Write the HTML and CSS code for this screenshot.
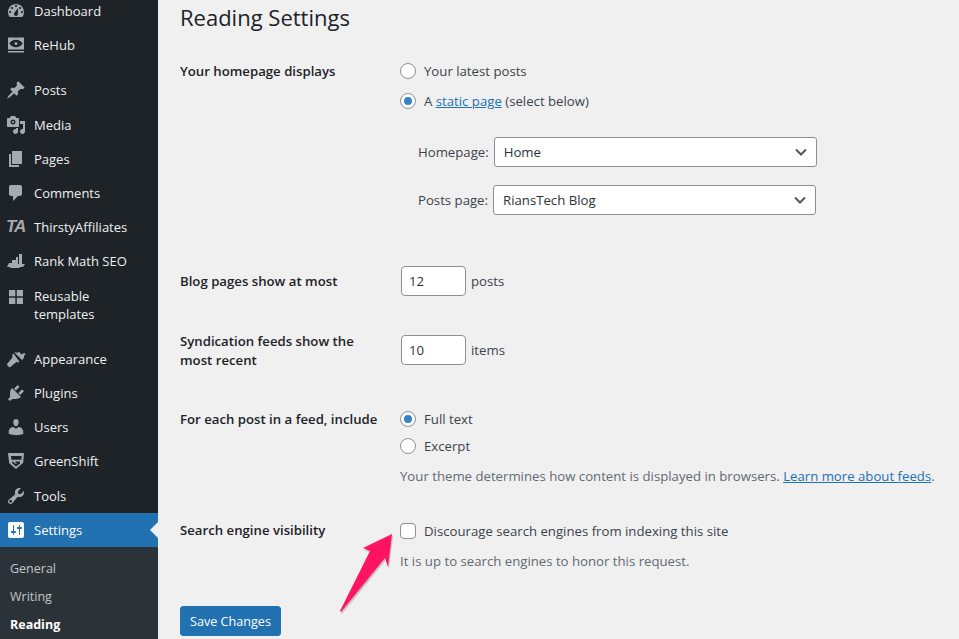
FILE: index.html
```html
<!DOCTYPE html>
<html lang="en">
<head>
    <meta charset="UTF-8">
    <meta name="viewport" content="width=device-width, initial-scale=1.0">
    <title>Reading Settings</title>
    <link rel="stylesheet" href="styles.css">
</head>
<body>
    <div class="admin">
        <nav class="sidebar">
            <ul class="menu">
                <li class="menu-item">
                    <svg class="menu-icon" viewBox="0 0 20 20"><path d="M3.760 16h12.480c1.100-1.430 1.760-3.140 1.760-5 0-4.420-3.580-8-8-8s-8 3.580-8 8c0 1.860.66 3.570 1.760 5zM10 4c.55 0 1 .45 1 1s-.45 1-1 1-1-.45-1-1 .45-1 1-1zM6 6c.55 0 1 .45 1 1s-.45 1-1 1-1-.45-1-1 .45-1 1-1zm8 0c.55 0 1 .45 1 1s-.45 1-1 1-1-.45-1-1 .45-1 1-1zm-5.370 5.550L12 7v6c0 1.100-.9 2-2 2s-2-.9-2-2c0-.57.24-1.080.63-1.450zM4 10c.55 0 1 .45 1 1s-.45 1-1 1-1-.45-1-1 .45-1 1-1zm12 0c.55 0 1 .45 1 1s-.45 1-1 1-1-.45-1-1 .45-1 1-1z"/></svg>
                    <span>Dashboard</span>
                </li>
                <li class="menu-item menu-item-last">
                    <svg class="menu-icon" viewBox="0 0 20 20"><path d="M2 2.500h16v12H2zM10 4.800c-3 0-5.600 1.800-6.600 3.700 1 1.900 3.600 3.700 6.600 3.700s5.600-1.800 6.600-3.700c-1-1.900-3.600-3.700-6.600-3.700zM10 7a1.500 1.500 0 1 1 0 3 1.500 1.500 0 0 1 0-3zM2 16h16v1.500H2z"/></svg>
                    <span>ReHub</span>
                </li>
                <li class="menu-item">
                    <svg class="menu-icon" viewBox="0 0 20 20"><path d="M10.440 3.020l1.820-1.820 6.360 6.350-1.830 1.820c-1.050-.68-2.480-.57-3.410.36l-.75.75c-.92.93-1.040 2.350-.35 3.410l-1.830 1.820-2.410-2.410-2.800 2.790c-.42.42-3.380 2.710-3.800 2.290s1.860-3.390 2.280-3.810l2.790-2.790L4.100 9.360l1.830-1.820c1.050.69 2.480.57 3.400-.36l.75-.75c.93-.92 1.050-2.350.36-3.410z"/></svg>
                    <span>Posts</span>
                </li>
                <li class="menu-item">
                    <svg class="menu-icon" viewBox="0 0 20 20"><path d="M13 11V4c0-.55-.45-1-1-1h-1.670L9 1H5L3.670 3H2c-.55 0-1 .45-1 1v7c0 .55.45 1 1 1h10c.55 0 1-.45 1-1zM7 4.500c1.380 0 2.500 1.120 2.500 2.500S8.380 9.500 7 9.500 4.500 8.380 4.500 7 5.620 4.500 7 4.500zM7 8c.55 0 1-.45 1-1s-.45-1-1-1-1 .45-1 1 .45 1 1 1zM14 6h5v10.500c0 1.380-1.120 2.500-2.500 2.500S14 17.880 14 16.500s1.120-2.500 2.500-2.500c.17 0 .34.02.5.05V9h-3V6zm-4 8.050V13h2v3.500c0 1.380-1.120 2.500-2.500 2.500S7 17.880 7 16.500 8.120 14 9.500 14c.17 0 .34.02.5.05z"/></svg>
                    <span>Media</span>
                </li>
                <li class="menu-item">
                    <svg class="menu-icon" viewBox="0 0 20 20"><path d="M6 15V2h10v13H6zm-1 1h8v2H3V5h2v11z"/></svg>
                    <span>Pages</span>
                </li>
                <li class="menu-item">
                    <svg class="menu-icon" viewBox="0 0 20 20"><path d="M5 2h9c1.100 0 2 .9 2 2v7c0 1.100-.9 2-2 2h-2l-5 5v-5H5c-1.100 0-2-.9-2-2V4c0-1.100.9-2 2-2z"/></svg>
                    <span>Comments</span>
                </li>
                <li class="menu-item">
                    <span class="menu-icon ta-icon">TA</span>
                    <span>ThirstyAffiliates</span>
                </li>
                <li class="menu-item">
                    <svg class="menu-icon" viewBox="0 0 20 20"><path d="M1 16l2-4h3V9h4V6h2v7h1V3h3v10h3l-2 3h-3l-.5 1h-9l-.5-1z"/></svg>
                    <span>Rank Math SEO</span>
                </li>
                <li class="menu-item menu-item-tall menu-item-last">
                    <svg class="menu-icon" viewBox="0 0 20 20"><path d="M3 3h6.300v6.300H3zM10.800 3H17v6.300h-6.200zM3 10.800h6.300V17H3zM10.800 10.800H17V17h-6.200z"/></svg>
                    <span>Reusable<br>templates</span>
                </li>
                <li class="menu-item">
                    <svg class="menu-icon" viewBox="0 0 20 20"><path d="M8.500 3.500l7.500 7.500c1.300-1 2.500-2.400 2-4l1.500-2-1.200-1.300-2.300 1.500-1.300.1c.1-1.300-1.300-2.800-2.100-2.300l-1.100.9c-1.500-1-2.900-1-3 0zM7.500 4.600L6.400 5.700v2.700L1.300 14.800c-.4.4-.4 1 0 1.400l1.600 1.700c.4.400 1 .4 1.400 0l6.400-5.200 1.500 1 1.100-1.100z"/></svg>
                    <span>Appearance</span>
                </li>
                <li class="menu-item">
                    <svg class="menu-icon" viewBox="0 0 20 20"><path d="M13.110 4.360L9.870 7.600 8 5.730l3.240-3.240c.35-.34 1.050-.2 1.560.32.52.51.66 1.210.31 1.550zm-8 1.770l.91-1.120 9.010 9.010-1.190.84c-.71.71-2.630 1.160-3.820 1.160H6.140L4.900 17.260c-.59.59-1.540.59-2.120 0-.59-.58-.59-1.530 0-2.120l1.240-1.240v-3.880c0-1.130.4-3.050 1.090-3.890zm7.260 3.970l3.240-3.240c.34-.35 1.040-.21 1.550.31.52.51.66 1.210.31 1.550l-3.240 3.250z"/></svg>
                    <span>Plugins</span>
                </li>
                <li class="menu-item">
                    <svg class="menu-icon" viewBox="0 0 20 20"><path d="M10 9.250c-2.270 0-2.730-3.440-2.730-3.440C7 4.020 7.820 2 9.960 2c2.150 0 2.970 2.020 2.700 3.810 0 0-.39 3.440-2.660 3.440zm0 2.570L12.720 10c2.390 0 4.520 2.330 4.520 4.530v2.490s-3.650 1.130-7.240 1.130c-3.650 0-7.240-1.130-7.240-1.130v-2.490c0-2.250 1.940-4.480 4.470-4.480z"/></svg>
                    <span>Users</span>
                </li>
                <li class="menu-item">
                    <svg class="menu-icon" viewBox="0 0 20 20"><path d="M2 2h16l-.8 9.800L10 18l-6.800-5.800zM5 5l.3 3.700h10.100l.2-3.700zM6 10.800l.2 1.400L10 15.500l4-3-.2-1.900H9.500v1.700h1.900l-1.400 1-2.500-2.100V10.800z"/></svg>
                    <span>GreenShift</span>
                </li>
                <li class="menu-item menu-item-tools">
                    <svg class="menu-icon" viewBox="0 0 20 20"><path d="M16.680 9.770c-1.340 1.340-3.300 1.670-4.950.99l-5.410 6.520c-.99.99-2.590.99-3.570 0-.99-.98-.99-2.580 0-3.570l6.520-5.420c-.68-1.650-.35-3.610.99-4.950 1.280-1.280 3.120-1.640 4.720-1.080l-2.810 2.810v2.830h2.830l2.810-2.810c.57 1.600.2 3.440-1.130 4.730zM3.660 16.340c.55.55 1.430.55 1.980 0 .55-.55.55-1.430 0-1.980s-1.430-.55-1.980 0c-.55.55-.55 1.430 0 1.980z"/></svg>
                    <span>Tools</span>
                </li>
                <li class="menu-item menu-item-current">
                    <svg class="menu-icon" viewBox="0 0 20 20"><path d="M18 16V4c0-1.100-.9-2-2-2H4c-1.100 0-2 .9-2 2v12c0 1.100.9 2 2 2h12c1.100 0 2-.9 2-2zM8 11h1c.55 0 1 .45 1 1s-.45 1-1 1H8v1.500c0 .28-.22.5-.5.5s-.5-.22-.5-.5V13H6c-.55 0-1-.45-1-1s.45-1 1-1h1V5.500c0-.28.22-.5.5-.5s.5.22.5.5V11zm5-2h-1c-.55 0-1-.45-1-1s.45-1 1-1h1V5.500c0-.28.22-.5.5-.5s.5.22.5.5V7h1c.55 0 1 .45 1 1s-.45 1-1 1h-1v5.500c0 .28-.22.5-.5.5s-.5-.22-.5-.5V9z"/></svg>
                    <span>Settings</span>
                </li>
            </ul>
            <ul class="submenu">
                <li>General</li>
                <li>Writing</li>
                <li class="submenu-current">Reading</li>
            </ul>
        </nav>

        <main class="content">
            <h1 class="page-title">Reading Settings</h1>

            <div class="row row-home">
                <div class="row-label">Your homepage displays</div>
                <div class="row-field">
                    <label class="choice"><span class="radio"></span>Your latest posts</label>
                    <label class="choice choice-second"><span class="radio radio-on"></span><span>A <a href="#">static page</a> (select below)</span></label>
                    <div class="page-select page-select-first">
                        <span class="select-label">Homepage:</span>
                        <div class="select">Home<svg class="chevron" viewBox="0 0 12 8"><path d="M1 1.500l5 5 5-5"/></svg></div>
                    </div>
                    <div class="page-select page-select-second">
                        <span class="select-label">Posts page:</span>
                        <div class="select">RiansTech Blog<svg class="chevron" viewBox="0 0 12 8"><path d="M1 1.500l5 5 5-5"/></svg></div>
                    </div>
                </div>
            </div>

            <div class="row row-blog">
                <div class="row-label">Blog pages show at most</div>
                <div class="row-field number-field"><div class="number">12</div>posts</div>
            </div>

            <div class="row row-feeds">
                <div class="row-label">Syndication feeds show the<br>most recent</div>
                <div class="row-field number-field"><div class="number">10</div>items</div>
            </div>

            <div class="row row-each">
                <div class="row-label">For each post in a feed, include</div>
                <div class="row-field">
                    <label class="choice"><span class="radio radio-on"></span>Full text</label>
                    <label class="choice choice-excerpt"><span class="radio"></span>Excerpt</label>
                    <p class="note note-feeds">Your theme determines how content is displayed in browsers. <a href="#">Learn more about feeds</a>.</p>
                </div>
            </div>

            <div class="row row-search">
                <div class="row-label">Search engine visibility</div>
                <div class="row-field">
                    <label class="choice"><span class="checkbox"></span>Discourage search engines from indexing this site</label>
                    <p class="note note-search">It is up to search engines to honor this request.</p>
                </div>
            </div>

            <button class="save" type="button">Save Changes</button>
        </main>
    </div>

    <svg class="arrow" viewBox="0 0 70 90" width="70" height="90">
        <polygon class="arrow-shadow" points="57,6 28,20 35,23 5,83 6,84 50,30 53,39"/>
        <polygon class="arrow-head" points="56,4 27,18 34,21 4,81 5,82 49,28 52,37"/>
    </svg>
</body>
</html>
```

FILE: styles.css
```css
* { margin: 0; padding: 0; box-sizing: border-box; }
html, body { height: 100%; overflow: hidden; }
body { font-family: "Open Sans", "Noto Sans", sans-serif; font-size: 13.2px; color: #3c434a; background-color: #f0f0f1; position: relative; }
a { color: #2271b1; }

.admin { display: flex; height: 639px; }

/* Sidebar */
.sidebar { width: 158px; flex-shrink: 0; background-color: #1d2327; color: #f0f0f1; overflow: hidden; }
.menu { list-style: none; margin-top: -6px; }
.menu-item { display: flex; align-items: center; gap: 8px; height: 34.2px; padding-left: 6px; font-size: 13px; position: relative; }
.menu-item-last { margin-bottom: 11px; }
.menu-item-tall { height: 53px; align-items: flex-start; padding-top: 8px; line-height: 18px; margin-bottom: 10px; }
.menu-item-tools { margin-top: 0.5px; }
.menu-icon { width: 20px; height: 20px; fill: #a7aaad; fill-rule: evenodd; flex-shrink: 0; }
.ta-icon { font-family: "Liberation Sans", sans-serif; font-size: 17px; font-weight: 700; font-style: italic; color: #a7aaad; letter-spacing: -1px; line-height: 20px; }
.menu-item-current { background-color: #2271b1; color: #fff; }
.menu-item-current .menu-icon { fill: #fff; }
.menu-item-current::after { content: ""; position: absolute; right: 0; top: 9px; border: 8px solid transparent; border-right-color: #f0f0f1; border-left: 0; }
.submenu { list-style: none; background-color: #2c3338; color: #c3c4c7; padding: 7.5px 0 0 10px; height: 92px; font-size: 12.5px; }
.submenu li { height: 28px; line-height: 28px; }
.submenu-current { color: #fff; font-weight: 700; }

/* Content */
.content { flex: 1; padding: 0 0 0 22px; }
.page-title { font-size: 22px; font-weight: 400; color: #1d2327; line-height: 36px; margin-top: -1px; }
.row { display: flex; }
.row-label { width: 220px; flex-shrink: 0; font-weight: 600; color: #1d2327; line-height: 19px; white-space: nowrap; padding-top: 1px; }
.row-field { flex: 1; }
.row-home { margin-top: 26px; }
.row-blog { margin-top: 51px; }
.row-feeds { margin-top: 34px; }
.row-each { margin-top: 39px; }
.row-search { margin-top: 35px; }
.row-feeds .row-label { padding-top: 2px; }
.row-search .row-label { padding-top: 0; }

.choice { display: flex; align-items: center; gap: 8px; height: 20px; }
.choice-second { margin-top: 10px; }
.choice-excerpt { margin-top: 7px; }
.radio { width: 16px; height: 16px; border-radius: 50%; border: 1px solid #8c8f94; background-color: #fff; display: flex; align-items: center; justify-content: center; }
.radio-on::before { content: ""; width: 8px; height: 8px; border-radius: 50%; background-color: #3582c4; }
.checkbox { width: 16px; height: 16px; border-radius: 4px; border: 1px solid #8c8f94; background-color: #fff; }

.page-select { display: flex; align-items: center; gap: 5px; padding-left: 18px; }
.page-select-first { margin-top: 26px; }
.page-select-second { margin-top: 18px; }
.select { width: 323px; height: 30px; border: 1px solid #8c8f94; border-radius: 3px; background-color: #fff; color: #2c3338; display: flex; align-items: center; justify-content: space-between; padding: 0 9px; }
.chevron { width: 12px; height: 8px; fill: none; stroke: #50575e; stroke-width: 2; }

.number-field { display: flex; align-items: center; gap: 5px; padding-left: 1px; }
.number { width: 65px; height: 30px; border: 1px solid #8c8f94; border-radius: 4px; background-color: #fff; color: #2c3338; line-height: 28px; padding-left: 7px; }
.row-blog .row-label { padding-top: 6px; }

.note { color: #646970; line-height: 20px; }
.note-feeds { margin-top: 10px; }
.note-search { margin-top: 10px; }

.save { display: block; margin-top: 35px; width: 101px; height: 30px; border: 1px solid #2271b1; border-radius: 3px; background-color: #2271b1; color: #fff; font-family: inherit; font-size: 12.6px; }

/* Annotation arrow */
.arrow { position: absolute; left: 336px; top: 530px; }
.arrow-head { fill: #ff1464; }
.arrow-shadow { fill: rgba(0, 0, 0, 0.18); }
```
